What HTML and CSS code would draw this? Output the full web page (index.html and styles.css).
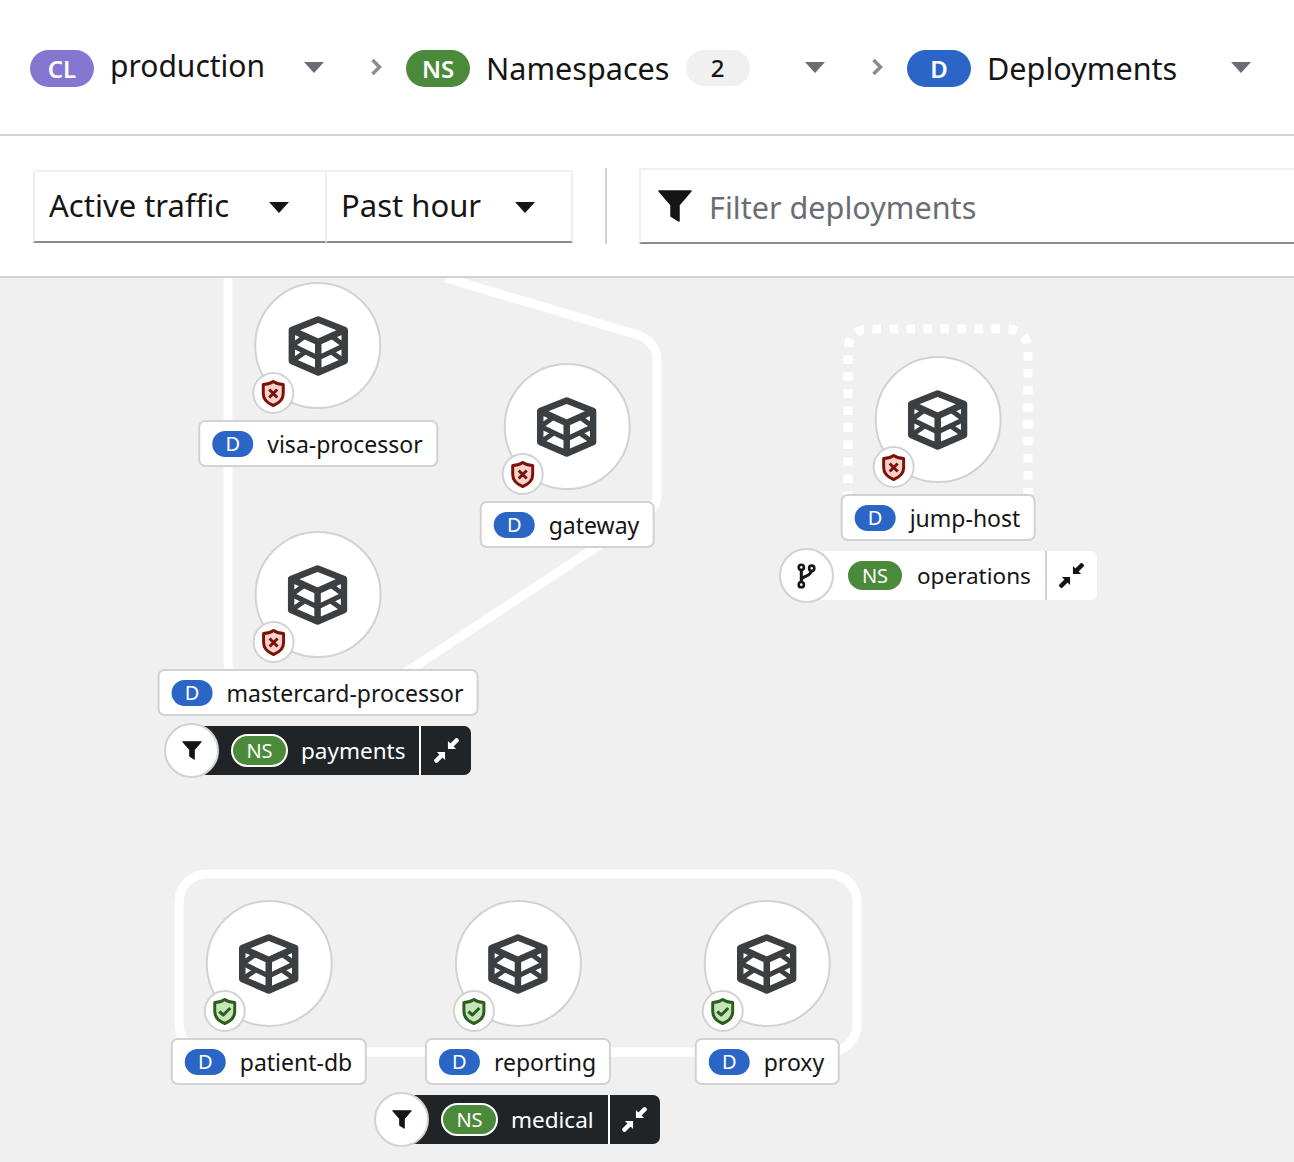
FILE: index.html
```html
<!DOCTYPE html>
<html lang="en">
<head>
    <meta charset="UTF-8">
    <title>Deployments</title>
    <link rel="stylesheet" href="styles.css">
</head>
<body>
    <svg class="sprites" width="0" height="0">
        <symbol id="cube" viewBox="0 0 60 60">
            <g fill="none" stroke="currentColor" stroke-linejoin="round">
                <path stroke-width="6.500" d="M30 3.500 56.500 14V45L30 56.500 3.500 45V14Z M3.500 14 30 26 56.500 14 M30 26V56.500"/>
                <path stroke-width="5" d="M17 20 4 29.500 30 42 56 29.500 43 20 M4 45 17 36 M56 45 43 36"/>
            </g>
        </symbol>
        <symbol id="shield-bad" viewBox="0 0 24 27">
            <path d="M12 1.500C15 3.500 18 4.500 22 4.500V13.500C22 19.500 17 23.500 12 25.500 7 23.500 2 19.500 2 13.500V4.500C6 4.500 9 3.500 12 1.500Z"/>
            <path fill="none" d="M8 9.500 16 17.500M16 9.500 8 17.500"/>
        </symbol>
        <symbol id="shield-good" viewBox="0 0 24 27">
            <path d="M12 1.500C15 3.500 18 4.500 22 4.500V13.500C22 19.500 17 23.500 12 25.500 7 23.500 2 19.500 2 13.500V4.500C6 4.500 9 3.500 12 1.500Z"/>
            <path fill="none" d="M6.500 13.500 10.500 17 17.500 10"/>
        </symbol>
        <symbol id="funnel" viewBox="0 0 34 32">
            <path d="M1 1H33L21 15V31L13 26V15Z" fill="currentColor" stroke="currentColor" stroke-width="1.500" stroke-linejoin="round"/>
        </symbol>
        <symbol id="compress" viewBox="0 0 26 26">
            <path d="M25 1 17 9M9 17 1 25" fill="none" stroke="currentColor" stroke-width="4.500"/>
            <path d="M14.500 3V11.500H23ZM3 14.500H11.500V23Z" fill="currentColor"/>
        </symbol>
        <symbol id="branch" viewBox="0 0 24 30">
            <path d="M6 6V24M6 20C6 14 18 17 18 7" fill="none" stroke="currentColor" stroke-width="3.500"/>
            <circle cx="6" cy="5" r="3" fill="#fff" stroke="currentColor" stroke-width="3"/>
            <circle cx="18" cy="6" r="3" fill="#fff" stroke="currentColor" stroke-width="3"/>
            <circle cx="6" cy="25" r="3" fill="#fff" stroke="currentColor" stroke-width="3"/>
        </symbol>
    </svg>

    <header class="crumbs">
        <div class="crumb crumb-cluster">
            <span class="badge badge-cl">CL</span>
            <span class="crumb-text crumb-text-up">production</span>
            <span class="caret caret-gray"></span>
        </div>
        <svg class="chevron" viewBox="0 0 12 18"><path d="M2.500 2 9.500 9 2.500 16" fill="none" stroke="currentColor" stroke-width="3.500"/></svg>
        <div class="crumb crumb-ns">
            <span class="badge badge-ns">NS</span>
            <span class="crumb-text">Namespaces</span>
            <span class="count">2</span>
            <span class="caret caret-gray"></span>
        </div>
        <svg class="chevron" viewBox="0 0 12 18"><path d="M2.500 2 9.500 9 2.500 16" fill="none" stroke="currentColor" stroke-width="3.500"/></svg>
        <div class="crumb crumb-dep">
            <span class="badge badge-d">D</span>
            <span class="crumb-text">Deployments</span>
            <span class="caret caret-gray"></span>
        </div>
    </header>

    <div class="toolbar">
        <div class="select-group">
            <div class="select select-traffic"><span class="select-text">Active traffic</span><span class="caret"></span></div>
            <div class="select select-time"><span class="select-text">Past hour</span><span class="caret"></span></div>
        </div>
        <div class="toolbar-divider"></div>
        <div class="filter-input">
            <svg class="filter-icon"><use href="#funnel"/></svg>
            <span class="placeholder">Filter deployments</span>
        </div>
    </div>

    <main class="canvas">
        <svg class="groups" viewBox="0 278 1294 884">
            <path class="group-line" d="M228 270V660Q228 690 258 690H379L648 513Q657 506 657 495V362Q657 342 638 335L446 278"/>
            <path class="group-line group-dotted" d="M848 500V351Q848 329 870 329H1006Q1028 329 1028 351V500"/>
            <rect class="group-line" x="179" y="874" width="678" height="178" rx="28"/>
        </svg>

        <div class="node node-visa">
            <div class="node-circle">
                <svg class="cube"><use href="#cube"/></svg>
                <div class="status status-bad"><svg><use href="#shield-bad"/></svg></div>
            </div>
            <div class="node-label"><span class="pill-d">D</span>visa-processor</div>
        </div>

        <div class="node node-gateway">
            <div class="node-circle">
                <svg class="cube"><use href="#cube"/></svg>
                <div class="status status-bad"><svg><use href="#shield-bad"/></svg></div>
            </div>
            <div class="node-label"><span class="pill-d">D</span>gateway</div>
        </div>

        <div class="node node-master">
            <div class="node-circle">
                <svg class="cube"><use href="#cube"/></svg>
                <div class="status status-bad"><svg><use href="#shield-bad"/></svg></div>
            </div>
            <div class="node-label"><span class="pill-d">D</span>mastercard-processor</div>
        </div>

        <div class="node node-jump">
            <div class="node-circle">
                <svg class="cube"><use href="#cube"/></svg>
                <div class="status status-bad"><svg><use href="#shield-bad"/></svg></div>
            </div>
            <div class="node-label"><span class="pill-d">D</span>jump-host</div>
        </div>

        <div class="node node-patient">
            <div class="node-circle">
                <svg class="cube"><use href="#cube"/></svg>
                <div class="status status-good"><svg><use href="#shield-good"/></svg></div>
            </div>
            <div class="node-label"><span class="pill-d">D</span>patient-db</div>
        </div>

        <div class="node node-reporting">
            <div class="node-circle">
                <svg class="cube"><use href="#cube"/></svg>
                <div class="status status-good"><svg><use href="#shield-good"/></svg></div>
            </div>
            <div class="node-label"><span class="pill-d">D</span>reporting</div>
        </div>

        <div class="node node-proxy">
            <div class="node-circle">
                <svg class="cube"><use href="#cube"/></svg>
                <div class="status status-good"><svg><use href="#shield-good"/></svg></div>
            </div>
            <div class="node-label"><span class="pill-d">D</span>proxy</div>
        </div>

        <div class="group-tag tag-payments tag-dark">
            <div class="tag-circle"><svg class="tag-funnel"><use href="#funnel"/></svg></div>
            <div class="tag-body">
                <span class="pill-ns">NS</span>
                <span class="tag-name">payments</span>
                <span class="tag-toggle"><svg class="tag-compress"><use href="#compress"/></svg></span>
            </div>
        </div>

        <div class="group-tag tag-operations">
            <div class="tag-circle"><svg class="tag-branch"><use href="#branch"/></svg></div>
            <div class="tag-body">
                <span class="pill-ns">NS</span>
                <span class="tag-name">operations</span>
                <span class="tag-toggle"><svg class="tag-compress"><use href="#compress"/></svg></span>
            </div>
        </div>

        <div class="group-tag tag-medical tag-dark">
            <div class="tag-circle"><svg class="tag-funnel"><use href="#funnel"/></svg></div>
            <div class="tag-body">
                <span class="pill-ns">NS</span>
                <span class="tag-name">medical</span>
                <span class="tag-toggle"><svg class="tag-compress"><use href="#compress"/></svg></span>
            </div>
        </div>
    </main>
</body>
</html>
```

FILE: styles.css
```css
* {
    box-sizing: border-box;
}
html, body {
    margin: 0;
    height: 1162px;
    overflow: hidden;
}
body {
    font-family: "Noto Sans", sans-serif;
    color: #151515;
    background-color: #fff;
}
.sprites {
    position: absolute;
}

/* breadcrumb row */
.crumbs {
    height: 136px;
    padding: 2px 0 0 30px;
    display: flex;
    align-items: center;
    border-bottom: 2px solid #d2d2d2;
}
.crumb {
    display: flex;
    align-items: center;
    font-size: 30.600px;
}
.crumb-cluster {
    width: 294px;
}
.crumb-ns {
    width: 419px;
}
.crumb-dep {
    width: 344px;
}
.badge {
    width: 64px;
    height: 37px;
    border-radius: 19px;
    color: #fff;
    font-size: 24px;
    line-height: 37px;
    text-align: center;
    font-weight: 600;
    flex: none;
}
.badge-cl {
    background-color: #8476d1;
}
.badge-ns {
    background-color: #4c8a3b;
}
.badge-d {
    background-color: #2b66c7;
}
.crumb-text {
    margin-left: 16px;
    margin-top: -1px;
    white-space: nowrap;
}
.crumb-text-up {
    font-size: 30px;
    margin-top: -5px;
}
.count {
    margin-left: 16px;
    width: 64px;
    height: 36px;
    border-radius: 18px;
    background-color: #f0f0f0;
    font-size: 24px;
    font-weight: 500;
    line-height: 36px;
    text-align: center;
}
.caret {
    margin-left: auto;
    width: 0;
    height: 0;
    border-left: 10px solid transparent;
    border-right: 10px solid transparent;
    border-top: 11px solid #151515;
}
.caret-gray {
    border-top-color: #6a6e73;
    margin-top: -2px;
}
.chevron {
    width: 12px;
    height: 18px;
    margin-left: 46px;
    margin-right: 24px;
    margin-top: -2px;
    color: #8a8d90;
    flex: none;
}

/* toolbar */
.toolbar {
    height: 142px;
    padding-left: 33px;
    display: flex;
    align-items: center;
    border-bottom: 2px solid #d2d2d2;
}
.select-group {
    display: flex;
    height: 73px;
    margin-top: 1px;
}
.select {
    display: flex;
    align-items: center;
    padding-left: 14px;
    font-size: 31px;
    border: 2px solid #f0f0f0;
    border-bottom: 2px solid #8a8d90;
}
.select-text {
    margin-top: -3px;
}
.select .caret {
    margin-top: 2px;
}
.select-traffic {
    width: 294px;
    padding-right: 36px;
}
.select-time {
    width: 246px;
    padding-right: 36px;
    border-left: 0;
}
.toolbar-divider {
    width: 2px;
    height: 76px;
    margin-left: 32px;
    background-color: #d2d2d2;
}
.filter-input {
    margin-left: 32px;
    flex: 1;
    height: 76px;
    display: flex;
    align-items: center;
    padding-left: 17px;
    border: 2px solid #f0f0f0;
    border-right: 0;
    border-bottom: 2px solid #8a8d90;
}
.filter-icon {
    width: 34px;
    height: 32px;
    color: #151515;
}
.placeholder {
    margin-left: 17px;
    margin-top: 2px;
    font-size: 30.600px;
    color: #6a6e73;
}

/* topology canvas */
.canvas {
    position: relative;
    height: 884px;
    background-color: #f0f0f0;
    overflow: hidden;
}
.groups {
    position: absolute;
    left: 0;
    top: 0;
    width: 1294px;
    height: 884px;
}
.group-line {
    fill: none;
    stroke: #fff;
    stroke-width: 9;
}
.group-dotted {
    stroke-dasharray: 8.500 8.500;
}
.node {
    position: absolute;
    transform: translateX(-50%);
    display: flex;
    flex-direction: column;
    align-items: center;
    gap: 11px;
}
.node-visa { left: 318px; top: 4px; }
.node-gateway { left: 567px; top: 85px; }
.node-master { left: 318px; top: 253px; }
.node-jump { left: 938px; top: 78px; }
.node-patient { left: 269px; top: 622px; }
.node-reporting { left: 518px; top: 622px; }
.node-proxy { left: 767px; top: 622px; }
.node-circle {
    position: relative;
    width: 127px;
    height: 127px;
    border-radius: 50%;
    background-color: #fff;
    border: 2px solid #d2d2d2;
    display: flex;
    align-items: center;
    justify-content: center;
}
.cube {
    width: 60px;
    height: 60px;
    color: #3c3f42;
}
.status {
    position: absolute;
    left: -4px;
    top: 88px;
    width: 42px;
    height: 42px;
    border-radius: 50%;
    background-color: #fff;
    border: 2px solid #d2d2d2;
    display: flex;
    align-items: center;
    justify-content: center;
}
.status svg {
    width: 24px;
    height: 27px;
    stroke-width: 3;
    stroke-linejoin: round;
}
.status-bad svg {
    fill: #f6d4cd;
    stroke: #7d1007;
}
.status-good svg {
    fill: #c6e5b8;
    stroke: #2a5d1f;
}
.node-label {
    height: 47px;
    padding: 0 13px 0 12px;
    display: flex;
    align-items: center;
    gap: 14px;
    font-size: 23px;
    white-space: nowrap;
    background-color: #fff;
    border: 2px solid #d2d2d2;
    border-radius: 7px;
}
.pill-d {
    width: 41px;
    height: 26px;
    border-radius: 13px;
    background-color: #2b66c7;
    color: #fff;
    font-size: 20px;
    line-height: 26px;
    text-align: center;
}

/* namespace tags under each group */
.group-tag {
    position: absolute;
    display: flex;
    align-items: center;
}
.tag-payments { left: 164px; top: 445px; }
.tag-operations { left: 779px; top: 270px; }
.tag-medical { left: 374px; top: 814px; }
.tag-circle {
    position: relative;
    z-index: 1;
    width: 55px;
    height: 55px;
    border-radius: 50%;
    background-color: #fff;
    border: 2px solid #d2d2d2;
    display: flex;
    align-items: center;
    justify-content: center;
}
.tag-funnel {
    width: 20px;
    height: 19px;
    color: #151515;
}
.tag-branch {
    width: 21px;
    height: 26px;
    color: #151515;
}
.tag-body {
    margin-left: -29px;
    height: 49px;
    padding-left: 43px;
    display: flex;
    align-items: center;
    font-size: 22.500px;
    background-color: #fff;
    border-radius: 0 7px 7px 0;
}
.pill-ns {
    width: 54px;
    height: 29px;
    border-radius: 15px;
    background-color: #4c8a3b;
    color: #fff;
    font-size: 20px;
    line-height: 29px;
    text-align: center;
}
.tag-name {
    margin-left: 15px;
    margin-right: 14px;
}
.tag-toggle {
    width: 52px;
    height: 49px;
    border-left: 2px solid #d2d2d2;
    display: flex;
    align-items: center;
    justify-content: center;
    color: #151515;
}
.tag-compress {
    width: 25px;
    height: 25px;
}
.tag-dark .tag-body {
    padding-left: 41px;
    background-color: #212427;
    color: #fff;
}
.tag-dark .tag-name {
    margin-left: 13px;
}
.tag-dark .tag-toggle {
    color: #fff;
    border-left-color: #fff;
}
.tag-dark .pill-ns {
    width: 57px;
    height: 33px;
    line-height: 29px;
    border: 2px solid #fff;
    border-radius: 17px;
}
```
